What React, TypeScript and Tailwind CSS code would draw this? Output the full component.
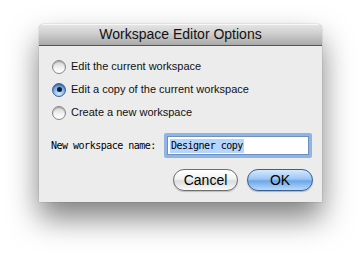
import React from "react";

function Radio({ checked }: { checked?: boolean }) {
  if (checked) {
    return (
      <span className="relative flex h-[14px] w-[14px] items-center justify-center rounded-full border border-[#3f5f92] bg-[radial-gradient(circle_at_50%_80%,#d2ebff_0%,#86b9ef_45%,#3b78c9_100%)] shadow-[inset_0_1px_1px_rgba(0,0,0,0.35)]">
        <span className="h-[5px] w-[5px] rounded-full bg-[#141a24]" />
      </span>
    );
  }
  return (
    <span className="h-[14px] w-[14px] rounded-full border border-[#858585] bg-[linear-gradient(to_bottom,#d2d2d2_0%,#f2f2f2_55%,#ffffff_100%)] shadow-[inset_0_1px_1px_rgba(0,0,0,0.25)]" />
  );
}

export default function App() {
  const sans = { fontFamily: '"Liberation Sans", Arial, sans-serif' };
  const mono = { fontFamily: '"DejaVu Sans Mono", "Liberation Mono", monospace' };
  return (
    <div className="h-[257px] w-[361px] bg-white pl-[39px] pt-[24px]" style={sans}>
      <div className="flex h-[178px] w-[283px] flex-col overflow-hidden rounded-t-[5px] bg-[#ececec] shadow-[0_16px_30px_rgba(0,0,0,0.5),0_0_1px_rgba(0,0,0,0.6)]">
        <div className="flex h-[22px] items-center justify-center border-b border-[#555] bg-[linear-gradient(to_bottom,#e6e6e6_0%,#cfcfcf_45%,#a9a9a9_100%)] text-[14px] text-[#111] shadow-[inset_0_1px_0_rgba(255,255,255,0.7)]">
          Workspace Editor Options
        </div>
        <div className="flex flex-1 flex-col pl-[13px] pr-[9px] pt-[9px]">
          <div className="flex flex-col text-[11px] text-[#111]">
            <div className="flex h-[23px] items-center gap-[5px]">
              <Radio />
              <span>Edit the current workspace</span>
            </div>
            <div className="flex h-[23px] items-center gap-[5px]">
              <Radio checked />
              <span>Edit a copy of the current workspace</span>
            </div>
            <div className="flex h-[23px] items-center gap-[5px]">
              <Radio />
              <span>Create a new workspace</span>
            </div>
          </div>
          <div className="mt-[9px] flex items-center" style={mono}>
            <span className="ml-[-1px] w-[113px] text-[10px] tracking-[-0.5px] text-black">New workspace name:</span>
            <div className="flex h-[25px] w-[148px] items-center rounded-[2px] bg-[#8fb5e6] p-[3px]">
              <div className="flex h-full w-full items-center border border-[#6f8fbf] bg-white pl-[2px]">
                <span className="bg-[#b5d5ff] px-[1px] text-[10px] leading-[14px] tracking-[-0.5px] text-black">Designer copy</span>
              </div>
            </div>
          </div>
          <div className="mt-[11px] flex justify-end gap-[9px] text-[14px]">
            <button className="flex h-[22px] w-[65px] items-center justify-center rounded-full border border-[#6e6e6e] bg-[linear-gradient(to_bottom,#ffffff_0%,#f2f2f2_45%,#dcdcdc_55%,#fafafa_100%)] text-black shadow-[0_1px_1px_rgba(0,0,0,0.2)]">
              Cancel
            </button>
            <button className="flex h-[22px] w-[66px] items-center justify-center rounded-full border border-[#3d5e8f] bg-[linear-gradient(to_bottom,#d5e9ff_0%,#9cc6f5_45%,#6ea6ea_55%,#b6dbff_100%)] text-black shadow-[0_1px_1px_rgba(0,0,0,0.25)]">
              OK
            </button>
          </div>
        </div>
      </div>
    </div>
  );
}
